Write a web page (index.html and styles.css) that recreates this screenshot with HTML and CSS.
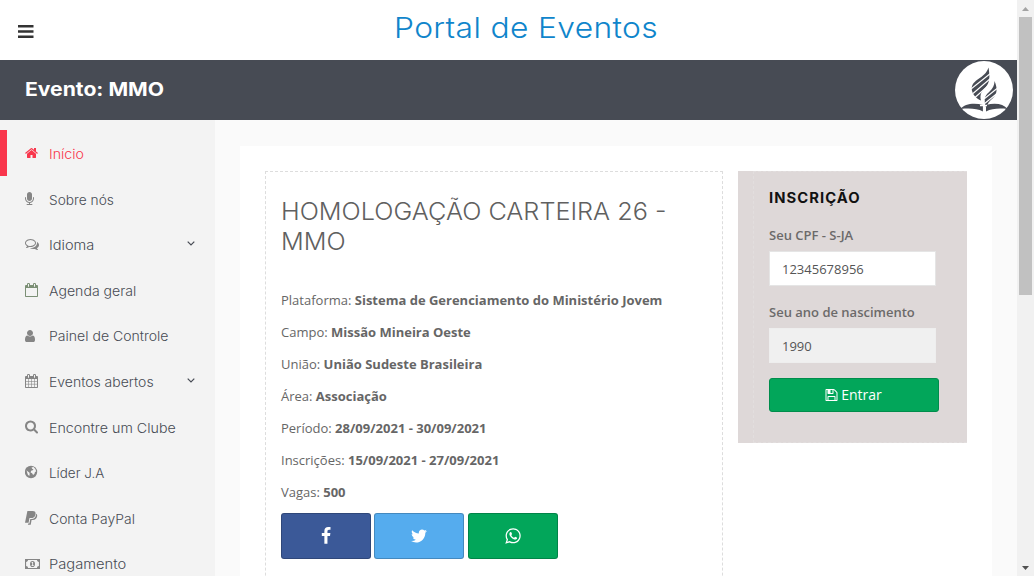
FILE: index.html
```html
<!DOCTYPE html>
<html lang="pt-BR">
<head>
<meta charset="utf-8">
<title>Portal de Eventos</title>
<link rel="stylesheet" href="styles.css">
</head>
<body>
<div class="page">
<header class="topbar">
  <svg class="burger" viewBox="0 0 16 14"><path d="M0 0h15.500v2.500H0zM0 5.300h15.500v2.500H0zM0 10.600h15.500v2.500H0z"/></svg>
  <h1 class="brand">Portal de Eventos</h1>
</header>
<div class="eventbar">
  <h2 class="event-title">Evento: MMO</h2>
  <svg class="logo" viewBox="0 0 58 58">
    <circle cx="29" cy="29" r="29" fill="#fff"/>
    <g fill="#474b54">
      <path d="M33.500 6.500c1.500 9 1.500 15-3 20-4 4-6 7-4.500 13-4.500-1.500-9-6.500-9.300-11.500C16.500 18 30 18 33.500 6.500z"/>
      <path d="M39.500 20c3 7 3 12.500-1.500 17-3.500 3-6 5.500-6.500 10-3-5-2.500-11 1-14.500 4-3.500 7-7 7-12.500z"/>
      <path d="M5.500 48c4-5 13-6.500 22.500-4v6.500c-6-3-13-3.500-22.500-2.500zM52.500 48c-4-5-12-6.500-21.500-4v6.500c6-3 13-3.500 21.500-2.500z"/>
    </g>
    <path d="M16 28l20-16M18 32.500l18-15.500M20 36.500l14-12.500M29 38l13-10.500M29 43l13-10.500" stroke="#fff" stroke-width="1.100"/>
    <path d="M28.700 39v13M25 44.500h7" stroke="#fff" stroke-width="1.600"/>
  </svg>
</div>
<div class="body">
<nav class="sidebar">
  <a class="item active"><svg class="ico" viewBox="64 0 1792 1792"><path d="M1472 992v480q0 26-19 45t-45 19h-384v-384h-256v384h-384q-26 0-45-19t-19-45v-480q0-1 .5-3t.5-3l575-474 575 474q1 2 1 6zm223-69l-62 74q-8 9-21 11h-3q-13 0-21-7l-692-577-692 577q-12 8-24 7-13-2-21-11l-62-74q-8-10-7-23.500t11-21.500l719-599q32-26 76-26t76 26l244 204v-195q0-14 9-23t23-9h192q14 0 23 9t9 23v408l219 182q10 8 11 21.500t-7 23.500z"/></svg><span class="t1">Início</span></a>
  <a class="item"><svg class="ico" viewBox="320 0 1792 1792"><path d="M1472 704v128q0 221-147.500 384.500t-364.500 187.500v132h256q26 0 45 19t19 45-19 45-45 19h-640q-26 0-45-19t-19-45 19-45 45-19h256v-132q-217-24-364.500-187.500t-147.500-384.500v-128q0-26 19-45t45-19 45 19 19 45v128q0 185 131.500 316.500t316.500 131.500 316.500-131.500 131.500-316.500v-128q0-26 19-45t45-19 45 19 19 45zm-256-384v512q0 132-94 226t-226 94-226-94-94-226v-512q0-132 94-226t226-94 226 94 94 226z"/></svg><span class="t2">Sobre nós</span></a>
  <a class="item"><svg class="ico" viewBox="0 0 1792 1792"><path d="M704 384q-153 0-286 52t-211.500 141-78.500 191q0 82 53 158t149 132l97 56-35 84q34-20 62-39l44-31 53 10q78 14 153 14 153 0 286-52t211.500-141 78.500-191-78.500-191-211.500-141-286-52zm0-128q191 0 353.500 68.500t256.500 186.500 94 257-94 257-256.500 186.500-353.500 68.500q-86 0-176-16-124 88-278 128-36 9-86 16h-3q-11 0-20.500-8t-11.500-21q-1-3-1-6.500t.5-6.500 2-6l2.500-5 3.500-5.500 4-5 4.500-5 4-4.500q5-6 23-25t26-29.500 22.500-29 25-38.500 20.500-44q-124-72-195-177t-71-224q0-139 94-257t256.500-186.500 353.500-68.500zm822 1169q10 24 20.500 44t25 38.500 22.500 29 26 29.500 23 25q1 1 4 4.500t4.500 5 4 5 3.500 5.500l2.500 5 2 6 .5 6.500-1 6.500q-3 14-13 22t-22 7q-50-7-86-16-154-40-278-128-90 16-176 16-271 0-472-132 58 4 88 4 161 0 309-45t264-129q125-92 192-212t67-254q0-77-23-152 129 71 204 178t75 230q0 120-71 224.500t-195 176.500z"/></svg><span class="t3">Idioma</span><svg class="chev" viewBox="0 0 8 5"><path d="M.7.7L4 4 7.300.7"/></svg></a>
  <a class="item"><svg class="ico green" viewBox="64 0 1792 1792"><path d="M192 1664h1408v-1024h-1408v1024zm384-1216v-288q0-14-9-23t-23-9h-64q-14 0-23 9t-9 23v288q0 14 9 23t23 9h64q14 0 23-9t9-23zm768 0v-288q0-14-9-23t-23-9h-64q-14 0-23 9t-9 23v288q0 14 9 23t23 9h64q14 0 23-9t9-23zm384-64v1280q0 52-38 90t-90 38h-1408q-52 0-90-38t-38-90v-1280q0-52 38-90t90-38h128v-96q0-66 47-113t113-47h64q66 0 113 47t47 113v96h384v-96q0-66 47-113t113-47h64q66 0 113 47t47 113v96h128q52 0 90 38t38 90z"/></svg><span class="t4">Agenda geral</span></a>
  <a class="item"><svg class="ico" viewBox="256 0 1792 1792"><path d="M1536 1399q0 109-62.500 187t-150.500 78h-854q-88 0-150.500-78t-62.500-187q0-85 8.500-160.500t31.500-152 58.500-131 94-89 134.500-34.500q131 128 313 128t313-128q76 0 134.500 34.500t94 89 58.500 131 31.500 152 8.500 160.500zm-256-887q0 159-112.500 271.500t-271.500 112.500-271.500-112.500-112.500-271.500 112.500-271.500 271.500-112.500 271.500 112.500 112.500 271.500z"/></svg><span class="t5">Painel de Controle</span></a>
  <a class="item"><svg class="ico" viewBox="64 0 1792 1792"><path d="M192 1664h1408v-1024h-1408v1024zm384-1216v-288q0-14-9-23t-23-9h-64q-14 0-23 9t-9 23v288q0 14 9 23t23 9h64q14 0 23-9t9-23zm768 0v-288q0-14-9-23t-23-9h-64q-14 0-23 9t-9 23v288q0 14 9 23t23 9h64q14 0 23-9t9-23zm384-64v1280q0 52-38 90t-90 38h-1408q-52 0-90-38t-38-90v-1280q0-52 38-90t90-38h128v-96q0-66 47-113t113-47h64q66 0 113 47t47 113v96h384v-96q0-66 47-113t113-47h64q66 0 113 47t47 113v96h128q52 0 90 38t38 90z"/><path d="M512 640v1024M896 640v1024M1280 640v1024M192 960h1408M192 1310h1408" stroke="#858585" stroke-width="75"/></svg><span class="t6">Eventos abertos</span><svg class="chev" viewBox="0 0 8 5"><path d="M.7.7L4 4 7.300.7"/></svg></a>
  <a class="item"><svg class="ico" viewBox="64 64 1792 1792"><path d="M1216 832q0-185-131.500-316.500t-316.500-131.500-316.500 131.500-131.500 316.500 131.500 316.500 316.500 131.500 316.500-131.500 131.500-316.500zm512 832q0 52-38 90t-90 38q-54 0-90-38l-343-342q-179 124-399 124-143 0-273.500-55.500t-225-150-150-225-55.500-273.500 55.500-273.500 150-225 225-150 273.500-55.500 273.500 55.500 225 150 150 225 55.500 273.500q0 220-124 399l343 343q37 37 37 90z"/></svg><span class="t7">Encontre um Clube</span></a>
  <a class="item"><svg class="ico" viewBox="0 0 14 14"><circle cx="6" cy="7" r="6.200"/><path d="M6.500 2.400l2-.3 1.800 1.800.9 2.300-1.300 1-.4 1.600-1.400 1.200-1-1.800-1.500-.8.5-1.600 1.600-.5.800-.8-1.300-.8zM1.500 5.200l1.300 1.400 1.500.8.400 1.400-.4 2.200-1.400-1.200-.6-1.800z" fill="#f3f3f3"/></svg><span class="t8">Líder J.A</span></a>
  <a class="item"><svg class="ico" viewBox="0 0 14 14"><path d="M2.400 0h5.100c2.400 0 3.500 1.200 3 3.400-.5 2.600-2.100 3.700-4.600 3.700H4.500L3.600 11.800H0z"/><path d="M11.200 2.700c1 .7 1.200 1.700.9 2.900-.5 2.400-2 3.400-4.300 3.400H6.600l-.9 4.700H2.900l.2-1.300h1.300L5.300 8h1.200c2.700 0 4.300-1.600 4.700-5.300z"/></svg><span class="t9">Conta PayPal</span></a>
  <a class="item"><svg class="ico money" viewBox="0 0 15 14"><path fill-rule="evenodd" d="M0 2h15v10H0zM3 3.100C3 4.200 2.200 4.900 1.100 4.900v4.200c1.100 0 1.900.7 1.900 1.800h9c0-1.100.8-1.800 1.900-1.800V4.900c-1.100 0-1.900-.7-1.900-1.800z"/><ellipse cx="7.500" cy="7" rx="2.500" ry="3.100"/><path d="M6.500 5.600l.8-.6h.8v3.300h.7V9H6.500v-.7h.7V6h-.7z" fill="#f3f3f3"/></svg><span class="t10">Pagamento</span></a>
</nav>
<main class="main">
  <div class="card">
    <section class="details">
      <h3 class="heading">HOMOLOGAÇÃO CARTEIRA 26 - <br>MMO</h3>
      <p>Plataforma: <b>Sistema de Gerenciamento do Ministério Jovem</b></p>
      <p>Campo: <b>Missão Mineira Oeste</b></p>
      <p>União: <b>União Sudeste Brasileira</b></p>
      <p>Área: <b>Associação</b></p>
      <p>Período: <b>28/09/2021 - 30/09/2021</b></p>
      <p>Inscrições: <b>15/09/2021 - 27/09/2021</b></p>
      <p>Vagas: <b>500</b></p>
      <div class="share">
        <a class="sbtn fb"><svg viewBox="0 0 1792 1792"><path d="M1343 12v264h-157q-86 0-116 36t-30 108v189h293l-39 296h-254v759h-306v-759h-255v-296h255v-218q0-186 104-288.500t277-102.500q147 0 228 12z"/></svg></a>
        <a class="sbtn tw"><svg viewBox="0 0 1792 1792"><path d="M1684 408q-67 98-162 167 1 14 1 42 0 130-38 259.500t-115.500 248.500-184.500 210.500-258 146-323 54.500q-271 0-496-145 35 4 78 4 225 0 401-138-105-2-188-64.500t-114-159.500q33 5 61 5 43 0 85-11-112-23-185.500-111.500t-73.500-205.500v-4q68 38 146 41-66-44-105-115t-39-154q0-88 44-163 121 149 294.500 238.500t371.500 99.500q-8-38-8-74 0-134 94.500-228.500t228.500-94.500q140 0 236 102 109-21 205-78-37 115-142 178 93-10 186-50z"/></svg></a>
        <a class="sbtn wa"><svg viewBox="0 0 1792 1792"><path d="M1113 974q13 0 97.500 44t89.500 53q2 5 2 15 0 33-17 76-16 39-71 65.500t-102 26.500q-57 0-190-62-98-45-170-118t-148-185q-72-107-71-194v-8q3-91 74-158 24-22 52-22 6 0 18 1.500t19 1.500q19 0 26.500 6.500t15.500 27.500q8 20 33 88t25 75q0 21-34.500 57.500t-34.500 46.500q0 7 5 15 34 73 102 137 56 53 151 101 12 7 22 7 15 0 54-48.500t52-48.500zm-203 530q127 0 243.500-50t200.500-134 134-200.500 50-243.500-50-243.500-134-200.500-200.500-134-243.500-50-243.500 50-200.500 134-134 200.500-50 243.500q0 203 120 368l-79 233 242-77q158 104 345 104zm0-1382q153 0 292.500 60t240.500 161 161 240.500 60 292.500-60 292.500-161 240.500-240.500 161-292.500 60q-195 0-365-94l-417 134 136-405q-108-178-108-389 0-153 60-292.500t161-240.500 240.500-161 292.500-60z"/></svg></a>
      </div>
    </section>
    <aside class="signup">
      <div class="signup-inner">
        <h4 class="signup-title">INSCRIÇÃO</h4>
        <label class="label">Seu CPF - S-JA</label>
        <div class="field">12345678956</div>
        <label class="label second">Seu ano de nascimento</label>
        <div class="field off">1990</div>
        <a class="enter"><svg viewBox="64 0 1792 1792"><path d="M512 1536h768v-384h-768v384zm896 0h128v-896q0-14-10-38.500t-20-34.500l-281-281q-10-10-34-20t-39-10v416q0 40-28 68t-68 28h-576q-40 0-68-28t-28-68v-416h-128v1280h128v-416q0-40 28-68t68-28h832q40 0 68 28t28 68v416zm-384-928v-320q0-13-9.500-22.500t-22.500-9.500h-192q-13 0-22.500 9.500t-9.500 22.500v320q0 13 9.500 22.500t22.500 9.500h192q13 0 22.500-9.500t9.500-22.500zm640 32v928q0 40-28 68t-68 28h-1344q-40 0-68-28t-28-68v-1344q0-40 28-68t68-28h928q40 0 88 20t76 48l280 280q28 28 48 76t20 88z"/></svg><span>Entrar</span></a>
      </div>
    </aside>
  </div>
</main>
</div>
</div>
<div class="scrollbar">
  <svg viewBox="0 0 17 17"><path d="M5 11h7L8.500 7z" fill="#a3a3a3"/></svg>
  <div class="thumb"></div>
  <svg class="down" viewBox="0 0 17 17"><path d="M5 7h7l-3.500 4z" fill="#505050"/></svg>
</div>
</body>
</html>
```
FILE: styles.css
```css
* { box-sizing: border-box; }
body { margin: 0; height: 576px; overflow: hidden; display: flex; background: #fafafa; color: #666; font: 13px/24px "Open Sans", sans-serif; }
h1, h2, h3, h4, p { margin: 0; }
svg { display: block; flex: none; }
.page { width: 1017px; height: 576px; overflow: hidden; }
.topbar { height: 60px; background: #fff; display: grid; grid-template-columns: 394px 1fr; }
.burger { width: 16px; height: 14px; margin: 25px 0 0 18px; fill: #333; }
.brand { font: 300 29px/36px Inter, sans-serif; color: #0f85cb; margin-top: 10px; letter-spacing: .3px; white-space: nowrap; transform: scaleX(1.097); transform-origin: 0 0; }
.eventbar { height: 60px; background: #474b54; display: flex; justify-content: space-between; align-items: center; padding: 0 4px 0 25px; }
.event-title { font: 700 19px/30px Inter, sans-serif; color: #fff; margin-top: -1px; white-space: nowrap; transform: scaleX(1.112); transform-origin: 0 0; }
.logo { width: 58px; height: 58px; }
.body { display: flex; height: 456px; }
.sidebar { width: 215px; flex: none; background: #f3f3f3; padding-top: 10px; }
.item { height: 45.600px; display: flex; align-items: center; padding-left: 25px; font: 300 13px/20px Inter, sans-serif; color: #474b54; white-space: nowrap; }
.item span { margin-top: 2.500px; transform-origin: 0 0; }
.t1 { transform: scaleX(1.09); }
.t2 { transform: scaleX(1.055); }
.t3 { transform: scaleX(1.12); }
.t4 { transform: scaleX(1.085); }
.t5 { transform: scaleX(1.08); }
.t6 { transform: scaleX(1.075); }
.t7 { transform: scaleX(1.095); }
.t8 { transform: scaleX(1.035); }
.t9 { transform: scaleX(1.07); }
.t10 { transform: scaleX(1.13); }
.item.active { color: #f9364c; border-left: 7px solid #f9364c; padding-left: 18px; }
.ico { width: 14px; height: 14px; margin: 1px 9.500px 0 0; fill: #858585; }
.ico.money { width: 15px; margin-right: 8.500px; }
.ico.green { fill: #7b8f75; }
.active .ico { fill: #f9364c; }
.chev { width: 8px; height: 5px; margin: -1px 20px 0 auto; fill: none; stroke: #474b54; stroke-width: 1.200; }
.main { flex: 1; padding: 26px 25px 0; }
.card { height: 500px; background: #fff; padding: 25px; display: flex; align-items: flex-start; gap: 15px; }
.details { width: 458px; height: 500px; border: 1px dashed #ddd; padding: 25px 15px 0; }
.heading { font: 300 24px/30px Inter, sans-serif; color: #606060; margin-bottom: 30px; white-space: nowrap; transform: scaleX(1.052); transform-origin: 0 0; }
.details p { margin-bottom: 8px; height: 24px; padding-top: 1px; white-space: nowrap; }
.share { display: flex; gap: 4px; margin-top: 10px; }
.sbtn { width: 90px; height: 46px; border: 1px solid rgba(0,0,0,.2); border-radius: 3px; display: flex; align-items: center; justify-content: center; }
.sbtn svg { width: 18px; height: 18px; fill: #fff; }
.fb { background: #3b5998; }
.tw { background: #55acee; margin-left: -1px; }
.wa { background: #02a65a; }
.signup { width: 229px; height: 272px; background: #ded8d8; padding-left: 15px; }
.signup-inner { height: 272px; border: 1px dashed #e2dede; border-right: 0; padding: 14px 27px 0 15px; }
.signup-title { font: 700 14px/24px Inter, sans-serif; color: #111; letter-spacing: 1px; margin-bottom: 13px; transform: scaleX(1.055); transform-origin: 0 0; }
.label { display: block; font-weight: 600; color: #6c6a6a; height: 24px; margin-bottom: 4px; }
.field { width: 167px; height: 35px; background: #fff; border: 1px solid #e5e5e5; padding: 6px 12px; color: #555; line-height: 23px; }
.field.off { background: #f0f0f0; border-color: #eee; }
.second { margin-top: 14px; }
.enter { width: 170px; height: 34px; margin-top: 15px; background: #02a65a; border: 1px solid #008d4c; border-radius: 3px; display: flex; align-items: center; justify-content: center; gap: 2px; padding-right: 1px; color: #fff; font-size: 14px; font-weight: 500; }
.enter svg { width: 14px; height: 14px; fill: #fff; }
.scrollbar { width: 17px; height: 576px; background: #f1f1f1; display: flex; flex-direction: column; }
.scrollbar svg { width: 17px; height: 17px; }
.thumb { width: 13px; height: 278px; margin-left: 2px; background: #c1c1c1; }
.scrollbar .down { margin-top: auto; }
```
